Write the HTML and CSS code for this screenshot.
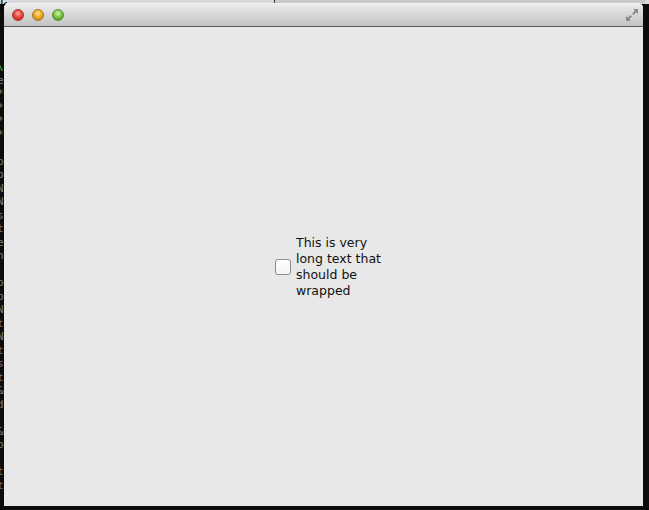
FILE: index.html
```html
<!DOCTYPE html>
<html>
<head>
<meta charset="utf-8">
<link rel="stylesheet" href="styles.css">
</head>
<body>
<div class="desktop">
  <div class="topstrip"><span class="k">k</span><span class="seg"></span></div>
  <div class="termtext">
    <span class="g">\</span><span>e</span><span>*</span><span>*</span><span>*</span><span>*</span><span></span><span>p</span><span>p</span><span>N</span><span>N</span><span>s</span><span>t</span><span>e</span><span>n</span><span></span><span>p</span><span>p</span><span>N</span><span>t</span><span>N</span><span>t</span><span>s</span><span>t</span><span>&amp;</span><span>d</span><span></span><span>&amp;</span><span>p</span><span></span><span>t</span><span>t</span>
  </div>
  <div class="window">
    <div class="titlebar">
      <span class="light red"></span>
      <span class="light yellow"></span>
      <span class="light green"></span>
      <svg class="fs" width="16" height="16" viewBox="0 0 16 16">
        <path d="M9 2h5v5l-1.8-1.8L9.5 7.9 8.1 6.5l2.7-2.7z" fill="#8a8a8a"/>
        <path d="M7 14H2V9l1.8 1.8 2.7-2.7 1.4 1.4-2.7 2.7z" fill="#8a8a8a"/>
      </svg>
    </div>
    <div class="content">
      <label class="check">
        <span class="box"></span>
        <span class="text">This is very long text that should be wrapped</span>
      </label>
    </div>
  </div>
</div>
</body>
</html>
```

FILE: styles.css
```css
html, body {
  margin: 0;
  padding: 0;
  width: 649px;
  height: 510px;
  overflow: hidden;
  background: #0c0c0c;
}
.desktop {
  position: relative;
  width: 649px;
  height: 510px;
  font-family: "DejaVu Sans", sans-serif;
}
.topstrip {
  display: flex;
  height: 4px;
  background: #d8d8d8;
}
.topstrip .k {
  font-size: 13px;
  line-height: 10px;
  color: #000;
}
.topstrip .seg {
  margin-left: 266px;
  width: 370px;
  border-left: 1px solid #333;
  background: #c8c8c8;
}
.termtext {
  display: flex;
  flex-direction: column;
  width: 4px;
  overflow: hidden;
  padding-top: 56px;
  font-family: "DejaVu Sans Mono", monospace;
  font-size: 11px;
  line-height: 13.5px;
  color: #7a7a7a;
}
.termtext span {
  height: 13.5px;
  margin-left: -3px;
}
.termtext .g { color: #3ec43e; }
.window {
  position: absolute;
  left: 4px;
  top: 3px;
  width: 639px;
  height: 503px;
  display: flex;
  flex-direction: column;
  border-radius: 5px 5px 0 0;
  overflow: hidden;
  background: #e8e8e8;
}
.titlebar {
  position: relative;
  height: 22px;
  flex: none;
  display: flex;
  align-items: center;
  padding-left: 8px;
  gap: 8px;
  background: linear-gradient(#ececec, #d6d6d6 50%, #c4c4c4);
  border-bottom: 1px solid #5a5a5a;
  border-top: 1px solid #f2f2f2;
}
.light {
  width: 12px;
  height: 12px;
  border-radius: 50%;
  box-sizing: border-box;
}
.red {
  background: radial-gradient(circle at 50% 35%, #ffb0a8 0, #f0554a 35%, #c8231b 80%);
  border: 1px solid #a8382f;
}
.yellow {
  background: radial-gradient(circle at 50% 35%, #ffe7a0 0, #f5b73a 35%, #d1850c 80%);
  border: 1px solid #a87624;
}
.green {
  background: radial-gradient(circle at 50% 35%, #d8f5b0 0, #8fd35a 35%, #4d9b1f 80%);
  border: 1px solid #5f8d36;
}
.fs {
  position: absolute;
  right: 3px;
  top: 3px;
}
.content {
  flex: 1;
  display: flex;
  align-items: center;
  justify-content: center;
  background: #e8e8e8;
  padding-left: 16px;
}
.check {
  display: flex;
  align-items: center;
  gap: 5px;
}
.box {
  width: 16px;
  height: 16px;
  box-sizing: border-box;
  border: 1px solid #8c8c8c;
  border-radius: 3px;
  background: linear-gradient(#ffffff, #f4f4f4);
}
.text {
  width: 92px;
  font-size: 12.5px;
  line-height: 16px;
  color: #111;
}
```
